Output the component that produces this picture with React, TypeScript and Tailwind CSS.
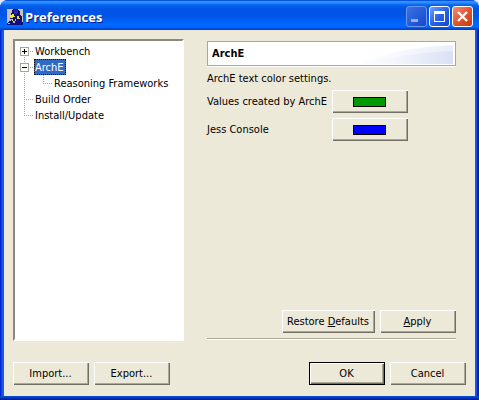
import type { ReactNode } from "react";
import { clsx } from "clsx";

type Gutter = "first-expander" | "expander" | "branch" | "last" | "child";

function Connector({ kind }: { kind: Gutter }) {
  const isExpander = kind === "first-expander" || kind === "expander";
  const isChild = kind === "child";
  const width = isChild ? 38 : 19;
  return (
    <svg width={width} height="16" className="shrink-0" shapeRendering="crispEdges" aria-hidden="true">
      <g stroke="#a5a39a" strokeDasharray="1 1" fill="none">
        {kind === "first-expander" && <path d="M9.5 12V16M15 8.5H19" />}
        {kind === "expander" && <path d="M9.5 0V4M9.5 12V16M15 8.5H19" />}
        {kind === "branch" && <path d="M9.5 0V16M9 8.5H19" />}
        {kind === "last" && <path d="M9.5 0V9M9 8.5H19" />}
        {isChild && <path d="M9.5 0V16M28.5 0V9M28 8.5H38" />}
      </g>
      {isExpander && (
        <g fill="none">
          <rect x="5.5" y="4.5" width="8" height="8" fill="#fff" stroke="#a5a39a" />
          <path d={kind === "first-expander" ? "M7 8.5H12M9.5 6V11" : "M7 8.5H12"} stroke="#000" />
        </g>
      )}
    </svg>
  );
}

function TreeRow({ kind, label, selected }: { kind: Gutter; label: string; selected?: boolean }) {
  return (
    <li role="treeitem" aria-selected={!!selected} className="flex h-4 items-center">
      <Connector kind={kind} />
      <span
        className={clsx(
          "h-4 border border-dotted leading-4 whitespace-nowrap",
          selected ? "border-[#14110a] bg-[#316ac5] pr-px text-white" : "border-transparent",
        )}
      >
        {label}
      </span>
    </li>
  );
}

function PushButton({
  children,
  wide,
  isDefault,
  label,
}: {
  children: ReactNode;
  wide?: boolean;
  isDefault?: boolean;
  label?: string;
}) {
  return (
    <button
      type="button"
      aria-label={label}
      className={clsx(
        "flex h-[23px] shrink-0 items-center justify-center whitespace-nowrap bg-[#ece9d8] pr-px",
        wide ? "w-[93px]" : "w-[76px]",
        isDefault
          ? "border border-black shadow-[inset_1px_1px_#fff,inset_-1px_-1px_#716f64,inset_-2px_-2px_#aca899]"
          : "shadow-[inset_1px_1px_#fff,inset_-1px_-1px_#716f64,inset_-2px_-2px_#aca899]",
      )}
    >
      {children}
    </button>
  );
}

function ColorSetting({ label, swatch }: { label: string; swatch: string }) {
  return (
    <div className="flex items-center">
      <span className="w-[125px] leading-[18px] whitespace-nowrap">{label}</span>
      <PushButton label={label}>
        <span className={clsx("h-[10px] w-[33px] border border-black", swatch)} />
      </PushButton>
    </div>
  );
}

function AppIcon() {
  return (
    <svg width="16" height="16" viewBox="0 0 16 16" shapeRendering="crispEdges" aria-hidden="true">
      <rect width="16" height="16" fill="#c3c1c4" />
      <path d="M6 0H11L13 3V5L15 8V11L14 12L16 14V16H0V14L3 12L5 11L3 10L5 7L4 5Z" fill="#10107a" />
      <path d="M7 1H9L11 3L10 5H7Z" fill="#2c2c9c" />
      <path d="M3 6H5V5H7V7H8V8H6V9H4V8H3Z" fill="#f2ea38" />
      <path d="M10 7H12V9H13V10H10ZM4 10H6V12H5V11H4Z" fill="#e5d642" />
      <path d="M8 10H9V12H8V14H6V12H8ZM1 14H3V15H1Z" fill="#bcbac6" />
    </svg>
  );
}

function CaptionButton({ kind }: { kind: "Minimize" | "Maximize" | "Close" }) {
  return (
    <button
      type="button"
      aria-label={kind}
      className={clsx(
        "size-[21px] rounded-[3px] border",
        kind === "Minimize" && "border-[#6f96ec] bg-linear-to-br from-[#3872e8] to-[#1648c9]",
        kind === "Maximize" && "border-white bg-linear-to-br from-[#6f9df7] via-[#2c62e4] to-[#1546cd]",
        kind === "Close" && "border-white bg-linear-to-br from-[#ee9078] via-[#df5432] to-[#c63c16]",
      )}
    >
      <svg width="19" height="19" fill="none" aria-hidden="true">
        {kind === "Minimize" && <path d="M4 13.5H11" stroke="#91b0f4" strokeWidth="3" />}
        {kind === "Maximize" && (
          <g stroke="#fff">
            <rect x="4.5" y="4.5" width="10" height="10" />
            <path d="M4 5.5H15" strokeWidth="3" />
          </g>
        )}
        {kind === "Close" && <path d="M5 5L14 14M14 5L5 14" stroke="#fff" strokeWidth="2.4" />}
      </svg>
    </button>
  );
}

export default function App() {
  return (
    <div className="flex min-h-screen flex-col bg-[#dce7f5] font-['DejaVu_Sans_Condensed','DejaVu_Sans',sans-serif] text-[11px] leading-[18px] text-black">
      <div className="flex grow flex-col overflow-hidden rounded-t-[8px] bg-[#0831d9]">
        <header className="flex h-[30px] items-center bg-[linear-gradient(180deg,#0855dd_0,#0855dd_1px,#3c94ff_1px,#238aff_3px,#0762ee_5px,#0054e3_9px,#0055e8_16px,#0068ff_24px,#0066ff_27px,#0046d2_29px,#003bc0_30px)] pt-[3px] pr-[6px] pl-[7px]">
          <AppIcon />
          <h1 className="ml-[2px] grow font-['Open_Sans',sans-serif] text-[13px] leading-4 font-bold text-white [text-shadow:1px_1px_#0a1883]">
            Preferences
          </h1>
          <div className="flex gap-[2px]">
            <CaptionButton kind="Minimize" />
            <CaptionButton kind="Maximize" />
            <CaptionButton kind="Close" />
          </div>
        </header>

        <div className="flex grow flex-col bg-[linear-gradient(90deg,#0019cf_0,#0831d9_1px,#166aee_3px,#0855dd_4px,#0855dd_calc(100%-4px),#166aee_calc(100%-3px),#0831d9_calc(100%-2px),#00138c_100%)] px-1">
          <main className="flex grow flex-col bg-[#ece9d8] px-[9px] pt-[9px] pb-[11px]">
            <div className="flex grow">
              <ul
                role="tree"
                aria-label="Preference pages"
                className="w-[171px] shrink-0 border-2 border-t-[#8c8a7d] border-r-white border-b-white border-l-[#8c8a7d] bg-white pt-[2px]"
              >
                <TreeRow kind="first-expander" label="Workbench" />
                <TreeRow kind="expander" label="ArchE" selected />
                <TreeRow kind="child" label="Reasoning Frameworks" />
                <TreeRow kind="branch" label="Build Order" />
                <TreeRow kind="last" label="Install/Update" />
              </ul>

              <section className="mr-[10px] ml-[23px] flex grow flex-col pt-[2px]">
                <div className="relative flex h-[25px] items-center overflow-hidden border border-[#aca899] bg-white pl-[4px] shadow-[0_1px_#fff]">
                  <svg
                    className="absolute inset-y-0 right-0 h-full w-[120px]"
                    viewBox="0 0 120 23"
                    preserveAspectRatio="none"
                    aria-hidden="true"
                  >
                    <defs>
                      <linearGradient id="sweep">
                        <stop offset="0" stopColor="#fff" />
                        <stop offset="0.4" stopColor="#f4f6fd" />
                        <stop offset="1" stopColor="#dae1f5" />
                      </linearGradient>
                    </defs>
                    <path d="M20 22Q60 6 118 3V22Z" fill="url(#sweep)" opacity=".6" />
                    <path d="M20 22Q75 11 118 9V22Z" fill="url(#sweep)" />
                  </svg>
                  <h2 className="relative text-[11px] font-bold">ArchE</h2>
                </div>
                <p className="mt-[4px]">ArchE text color settings.</p>
                <div className="mt-[2px] flex flex-col gap-[5px]">
                  <ColorSetting label="Values created by ArchE" swatch="bg-[#009a00]" />
                  <ColorSetting label="Jess Console" swatch="bg-[#0000ff]" />
                </div>
                <div className="mt-auto flex justify-end gap-[5px]">
                  <PushButton wide>
                    <span>
                      Restore <u>D</u>efaults
                    </span>
                  </PushButton>
                  <PushButton>
                    <span>
                      <u>A</u>pply
                    </span>
                  </PushButton>
                </div>
                <hr className="mt-[5px] mb-[1px] h-[2px] border-t border-b border-t-[#aca899] border-b-white" />
              </section>
            </div>

            <footer className="mt-[21px] flex gap-[5px]">
              <PushButton>Import...</PushButton>
              <PushButton>Export...</PushButton>
              <div className="grow" />
              <PushButton isDefault>OK</PushButton>
              <PushButton>Cancel</PushButton>
            </footer>
          </main>
          <div className="-mx-1 h-1 bg-linear-to-b from-[#0855dd] to-[#00138c]" />
        </div>
      </div>
    </div>
  );
}
